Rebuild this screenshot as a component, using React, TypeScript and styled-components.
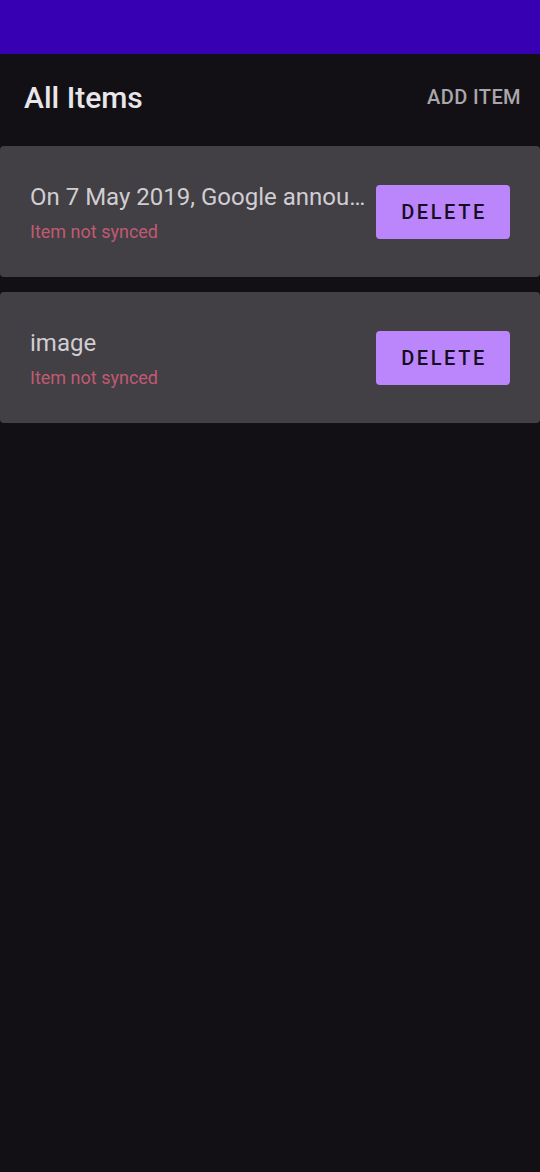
import React from "react";
import styled, { createGlobalStyle } from "styled-components";

const Global = createGlobalStyle`
  html, body { margin: 0; padding: 0; background: #121014; }
  body { font-family: Roboto, "Noto Sans", "Liberation Sans", sans-serif; }
  * { box-sizing: border-box; }
`;

const Page = styled.div`
  min-height: 1172px;
  background: #121014;
`;

const StatusBar = styled.div`
  height: 54px;
  background: #3700b3;
`;

const Header = styled.header`
  height: 86px;
  display: flex;
  align-items: center;
  justify-content: space-between;
  padding: 0 19px 0 24px;
`;

const Title = styled.h1`
  margin: 0;
  font-size: 30px;
  font-weight: 500;
  color: #e8e6ea;
`;

const AddButton = styled.button`
  background: none;
  border: none;
  padding: 0;
  font-family: inherit;
  font-size: 20px;
  font-weight: 500;
  color: #a9a7ab;
  letter-spacing: 0.4px;
`;

const List = styled.div`
  margin-top: 6px;
  display: flex;
  flex-direction: column;
  gap: 15px;
`;

const Card = styled.div`
  height: 131px;
  background: #423f45;
  border-radius: 4px;
  display: flex;
  align-items: center;
  padding: 0 30px;
  gap: 8px;
`;

const TextCol = styled.div`
  flex: 1;
  min-width: 0;
  padding-top: 4px;
  display: flex;
  flex-direction: column;
`;

const ItemTitle = styled.div`
  font-size: 24px;
  line-height: 28px;
  color: #d0ced2;
  white-space: nowrap;
  overflow: hidden;
  text-overflow: ellipsis;
`;

const Status = styled.div`
  margin-top: 9px;
  font-size: 18px;
  line-height: 24px;
  color: #c05a72;
`;

const DeleteButton = styled.button`
  flex: none;
  width: 134px;
  height: 54px;
  border: none;
  border-radius: 4px;
  background: #bb86fc;
  color: #160d1f;
  font-family: inherit;
  font-size: 20px;
  font-weight: 500;
  letter-spacing: 2.6px;
  padding: 0 0 0 2px;
`;

const items = [
  { title: "On 7 May 2019, Google announced that the Kotlin programming language", status: "Item not synced" },
  { title: "image", status: "Item not synced" },
];

export default function App() {
  return (
    <Page>
      <Global />
      <StatusBar />
      <Header>
        <Title>All Items</Title>
        <AddButton>ADD ITEM</AddButton>
      </Header>
      <List>
        {items.map((it, i) => (
          <Card key={i}>
            <TextCol>
              <ItemTitle>{it.title}</ItemTitle>
              <Status>{it.status}</Status>
            </TextCol>
            <DeleteButton>DELETE</DeleteButton>
          </Card>
        ))}
      </List>
    </Page>
  );
}
